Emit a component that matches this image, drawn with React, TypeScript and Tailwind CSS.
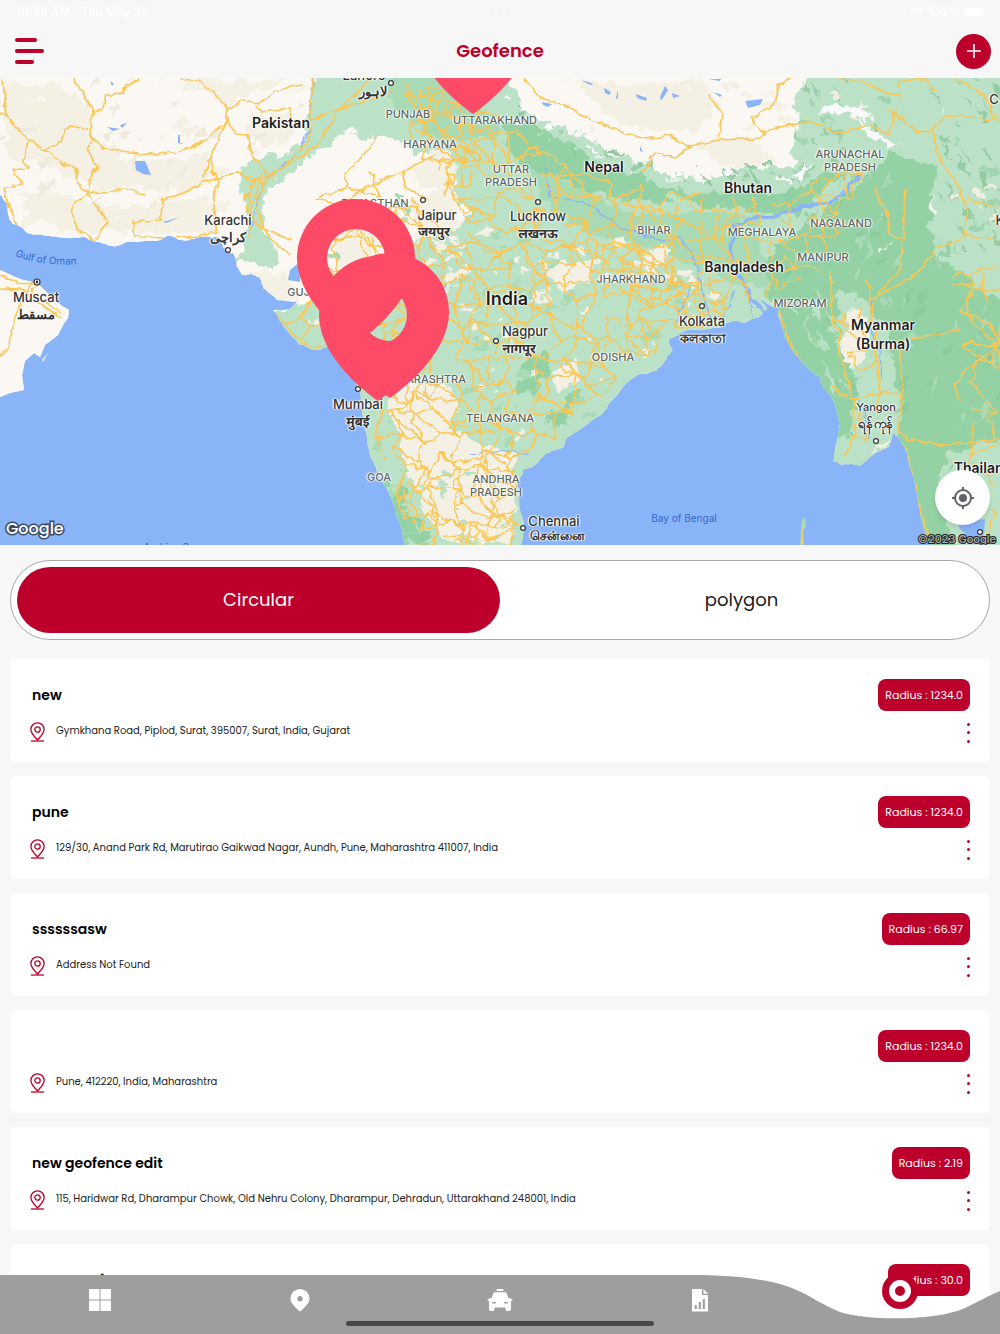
import React from "react";

type Pt = [number, number];

/* ---------- map data ---------- */

const ASIA: Pt[] = [
  [0, 70], [0, 194], [7, 203], [12, 223], [25, 231], [43, 235], [67, 238], [83, 237], [97, 242], [112, 246],
  [130, 242], [160, 240], [167, 236], [180, 240], [200, 237], [217, 237], [223, 248], [233, 253], [237, 267],
  [243, 275], [252, 274], [260, 278], [263, 288], [277, 300], [290, 301], [302, 299], [290, 309], [273, 310],
  [283, 325], [300, 345], [313, 350], [325, 348], [334, 335], [342, 345], [350, 365], [360, 393], [362, 410],
  [367, 437], [372, 460], [383, 483], [392, 500], [400, 523], [407, 550], [520, 550], [525, 527], [520, 510],
  [518, 483], [523, 470], [535, 465], [547, 453], [563, 448], [568, 437], [590, 422], [607, 408], [623, 387],
  [637, 375], [657, 370], [667, 358], [672, 351], [669, 339], [687, 330], [713, 328], [730, 322], [743, 323],
  [756, 318], [767, 310], [762, 300], [770, 306], [778, 308], [782, 327], [790, 347], [807, 367], [820, 377],
  [823, 387], [833, 400], [840, 423], [835, 450], [833, 462], [845, 464], [860, 466], [873, 455], [888, 448],
  [893, 431], [905, 447], [912, 473], [920, 510], [932, 550], [1010, 550], [1010, 70],
];

const OMAN: Pt[] = [
  [0, 270], [20, 279], [37, 283], [55, 300], [62, 306], [69, 310], [68, 318], [63, 325], [58, 335], [45, 345],
  [40, 357], [34, 353], [25, 361], [22, 375], [24, 390], [10, 393], [0, 397],
];

const GREEN: Pt[] = [
  [316, 70], [312, 100], [303, 130], [300, 145], [285, 158], [255, 157], [241, 168], [243, 190], [250, 225],
  [238, 262], [262, 268], [280, 262], [264, 235], [262, 205], [275, 180], [310, 157], [335, 137], [355, 133],
  [368, 140], [385, 138], [405, 145], [425, 152], [445, 155], [455, 190], [470, 215], [440, 228], [418, 240],
  [400, 255], [345, 280], [310, 300], [275, 312], [270, 325], [290, 355], [330, 360], [345, 393], [350, 430],
  [390, 560], [540, 560], [550, 480], [760, 345], [770, 350], [800, 400], [810, 480], [890, 480], [910, 560], [1010, 560], [1010, 70], [806, 70], [792, 105],
  [800, 125], [790, 150], [796, 166], [750, 168], [715, 178], [680, 176], [640, 165], [605, 148], [560, 128],
  [520, 108], [498, 70],
];

const DEEP: Pt[][] = [
  [[390, 70], [445, 70], [470, 105], [500, 125], [460, 140], [420, 132], [392, 110]],
  [[500, 140], [560, 180], [640, 215], [760, 215], [770, 290], [700, 270], [620, 240], [540, 200]],
  [[505, 118], [545, 130], [600, 165], [650, 182], [700, 192], [770, 192], [820, 175], [850, 165], [800, 215], [720, 206], [640, 200], [560, 178], [510, 150]],
  [[820, 215], [860, 185], [890, 150], [935, 165], [935, 240], [950, 265], [1010, 310], [1010, 440], [950, 450], [915, 475], [900, 430], [890, 330], [865, 300], [835, 290], [840, 330], [852, 370], [850, 440], [832, 440], [820, 392], [790, 350], [770, 300], [775, 245]],
  [[895, 435], [950, 445], [940, 490], [958, 550], [920, 550]],
  [[385, 475], [400, 485], [405, 510], [430, 530], [430, 550], [400, 550], [380, 500]],
  [[520, 365], [545, 350], [550, 375], [535, 398], [518, 390]],
  [[545, 425], [580, 390], [572, 410], [550, 430]],
];

const PALE: Pt[][] = [
  [[400, 372], [440, 382], [462, 405], [450, 430], [480, 445], [505, 450], [515, 480], [508, 545], [455, 545], [430, 520], [415, 480], [400, 440], [388, 400]],
  [[410, 195], [440, 185], [460, 200], [455, 230], [420, 242]],
  [[435, 150], [460, 165], [450, 195], [420, 190], [405, 165]],
  [[330, 230], [365, 222], [385, 240], [370, 275], [340, 265]],
  [[847, 310], [862, 308], [868, 345], [855, 368], [843, 350]],
  [[640, 262], [665, 245], [670, 262], [650, 275]],
  [[545, 270], [590, 262], [600, 285], [570, 292]],
  [[240, 272], [262, 268], [290, 280], [300, 300], [265, 300]],
  [[555, 370], [575, 358], [578, 385], [560, 392]],
  [[875, 450], [888, 440], [890, 448], [876, 456]],
];

const BEIGE: Pt[][] = [
  [[0, 78], [60, 84], [95, 110], [92, 140], [118, 155], [175, 162], [210, 150], [205, 185], [160, 192], [100, 190], [60, 170], [10, 160]],
  [[10, 190], [70, 195], [150, 205], [205, 195], [222, 225], [160, 234], [90, 232], [30, 222]],
  [[180, 78], [290, 78], [250, 92], [228, 110], [205, 92]],
  [[250, 110], [290, 112], [290, 140], [262, 148], [247, 130]],
  [[560, 78], [700, 78], [720, 100], [700, 135], [650, 130], [600, 105]],
  [[700, 145], [760, 145], [790, 160], [720, 165]],
];

const LAKES: Pt[][] = [
  [[135, 161], [145, 161], [151, 175], [143, 174], [136, 170]],
  [[178, 135], [180, 135], [180, 143], [183, 143], [182, 144], [178, 143]],
  [[107, 127], [120, 129], [113, 131]], [[120, 125], [127, 123], [122, 128]],
  [[110, 81], [114, 84], [112, 86]],
  [[745, 101], [763, 99], [760, 105], [748, 108]], [[636, 94], [647, 98], [646, 101], [637, 98]],
  [[665, 86], [668, 90], [661, 101], [660, 97]], [[672, 93], [680, 96], [673, 98]],
  [[604, 88], [611, 92], [609, 95], [605, 93]], [[581, 80], [594, 84], [590, 85]],
  [[542, 102], [552, 104], [548, 107], [543, 105]], [[618, 90], [618, 99], [616, 98]],
  [[713, 92], [722, 95], [720, 97]], [[709, 79], [721, 79], [720, 81]],
  [[640, 146], [643, 152], [640, 151]], [[163, 222], [180, 217], [166, 223]],
  [[290, 270], [300, 262], [300, 282], [288, 280]],
  [[957, 523], [985, 519], [984, 533], [978, 545], [961, 530]],
];

const MAIN_ROADS = [
  "M0 115 7 116 16 127 28 140 45 149 57 145 70 126 91 130 90 136 105 148 120 152 150 155 180 151 205 142 218 128 228 122 236 134 247 135 252 155 265 173",
  "M2 80 5 100 7 115M28 140 24 160 27 168 13 170 22 184 4 188 8 205 18 226",
  "M74 80 85 95 92 108 91 135 88 150 98 168 91 174 88 192 72 208 78 230 95 240",
  "M45 149 60 163 76 167 80 188 88 192 107 193 125 188 146 195M88 192 107 222 97 238",
  "M91 115 102 108 107 97 122 92 138 79M181 79 202 81 219 99 227 108 227 122 213 151 211 171 219 178",
  "M227 110 243 101 258 104 275 92 300 85M256 106 262 112 290 108 292 122M219 178 204 182 190 190 162 200 161 220 134 222 134 236 160 239 200 236 218 232",
  "M203 179 213 152M219 178 213 206 217 233M220 178 238 172 250 182 270 174 295 160 318 145 335 115 370 80",
  "M313 78 309 140 280 170 260 185 249 210 250 235",
  "M262 174 250 186 247 210 257 225 290 240M270 174 257 200 262 225 272 240 290 255M242 176 262 180M244 200 256 182",
  "M375 140 360 158 345 174 347 188 316 199 340 204 370 186 404 171 435 155M370 172 380 197 346 188M404 171 405 187 430 200M310 120 345 108 395 90",
  "M523 78 540 98 565 104 590 120 620 131 645 139 670 135 690 146 720 140 758 138 780 127 810 122 840 133 870 125 889 135 895 110",
  "M710 97 723 115 719 138M765 135 751 118 774 105 778 86 792 78M690 146 676 158 655 153 642 172",
  "M840 78 865 82 880 90 900 95 898 82 925 78 935 90M889 110 900 118 920 133 932 130 940 160 955 180 968 210 965 235 995 240",
  "M932 130 945 115 970 117 1000 121M954 78 985 95 995 120M1000 208 968 200M968 235 935 250 915 275 870 300",
  "M875 190 888 215 890 235 903 240 905 190M903 240 900 270 880 290 872 310 868 335",
  "M779 310 788 340 800 360 812 380M832 386 850 400 880 392 902 395M831 320 840 335 840 355 853 400 855 435 845 455",
  "M867 280 872 315 880 385 878 410M899 340 903 390 898 430 910 440 940 445 1000 440M868 345 900 342 930 335 960 330M1000 345 965 370 955 385 960 400",
  "M905 445 912 475 918 500 928 540M831 270 832 320 850 325M1000 290 975 290 960 310 990 325 1000 345",
  "M0 289 20 290 40 298 60 312M32 282 20 305 14 320 10 345 0 357M36 284 30 297 60 318M0 275 20 284 36 283",
  "M273 311 300 342 313 348 326 345M283 325 300 318 310 327 300 342M300 318 312 300",
];

function makeRandom(seed: number) {
  let s = seed;
  return () => {
    s = (s * 1664525 + 1013904223) % 4294967296;
    return s / 4294967296;
  };
}

function inside([x, y]: Pt, poly: Pt[]) {
  let hit = false;
  for (let i = 0, j = poly.length - 1; i < poly.length; j = i++) {
    const [xi, yi] = poly[i];
    const [xj, yj] = poly[j];
    if (yi > y !== yj > y && x < ((xj - xi) * (y - yi)) / (yj - yi) + xi) hit = !hit;
  }
  return hit;
}

const toPath = (p: Pt[]) => "M" + p.map(([x, y]) => `${x.toFixed(1)} ${y.toFixed(1)}`).join("L") + "Z";

/* Splits every edge and pushes the new points sideways, so that areas get a natural outline. */
function rough(poly: Pt[], seed: number, amount: number): Pt[] {
  const rnd = makeRandom(seed);
  let out = poly;
  let amp = amount;
  for (let pass = 0; pass < 3; pass++) {
    const next: Pt[] = [];
    out.forEach((a, i) => {
      const b = out[(i + 1) % out.length];
      next.push(a);
      next.push([(a[0] + b[0]) / 2 + (rnd() - 0.5) * amp, (a[1] + b[1]) / 2 + (rnd() - 0.5) * amp]);
    });
    out = next;
    amp *= 0.6;
  }
  return out;
}

function roadNet(region: Pt[], cell: number, seed: number, keep: number) {
  const rnd = makeRandom(seed);
  const cols = Math.ceil(1020 / cell);
  const rows = Math.ceil(480 / cell);
  const nodes: Pt[][] = [];
  for (let r = 0; r <= rows; r++) {
    nodes.push([]);
    for (let c = 0; c <= cols; c++) nodes[r].push([(c + (rnd() - 0.5) * 0.95) * cell, 74 + (r + (rnd() - 0.5) * 0.95) * cell]);
  }
  let d = "";
  const link = (a: Pt, b: Pt) => {
    const k1 = rnd();
    const k2 = rnd();
    if (rnd() > keep || !inside(a, region) || !inside(b, region)) return;
    const q: Pt = [a[0] + (b[0] - a[0]) / 3 + (k1 - 0.5) * cell * 0.3, a[1] + (b[1] - a[1]) / 3 + (k2 - 0.5) * cell * 0.3];
    const w: Pt = [a[0] + ((b[0] - a[0]) * 2) / 3 + (k2 - 0.5) * cell * 0.3, a[1] + ((b[1] - a[1]) * 2) / 3 + (k1 - 0.5) * cell * 0.3];
    d += "M" + [a, q, w, b].map(([x, y]) => `${x.toFixed(1)} ${y.toFixed(1)}`).join(" ");
  };
  for (let r = 0; r < rows; r++)
    for (let c = 0; c < cols; c++) {
      link(nodes[r][c], nodes[r][c + 1]);
      link(nodes[r][c], nodes[r + 1][c]);
      if (rnd() < 0.4) link(nodes[r][c], nodes[r + 1][c + 1]);
    }
  return d;
}

function patches(region: Pt[], count: number, size: number, seed: number, slant = 0) {
  const rnd = makeRandom(seed);
  let d = "";
  for (let i = 0; i < count; i++) {
    const cx = rnd() * 1000;
    const cy = 78 + rnd() * 467;
    const s = size * (0.35 + rnd());
    const pts: Pt[] = [];
    for (let k = 0; k < 9; k++) {
      const a = (k / 9) * Math.PI * 2;
      const r = s * (0.35 + rnd() * 0.9);
      const y = Math.sin(a) * r * 0.6;
      pts.push([cx + Math.cos(a) * r + y * slant, cy + y]);
    }
    if (inside([cx, cy], region)) d += toPath(pts);
  }
  return d;
}

/* Tall thin patches, for mountain ridges that run north to south. */
function ridges(region: Pt[], count: number, size: number, seed: number, lean: number) {
  const rnd = makeRandom(seed);
  let d = "";
  for (let i = 0; i < count; i++) {
    const x = rnd() * 1000;
    const y = 78 + rnd() * 467;
    const h = size * (0.5 + rnd());
    const w = 1 + rnd() * 3;
    const k = lean * h;
    if (inside([x, y], region))
      d += toPath([[x - k, y - h], [x + w - k / 2, y - h / 3], [x + w, y + h / 4], [x + k, y + h], [x - w / 2, y + h / 3], [x - w, y - h / 4]]);
  }
  return d;
}

const NORTH_INDIA: Pt[] = [[385, 78], [440, 80], [510, 120], [600, 180], [770, 200], [775, 300], [700, 325], [640, 300], [560, 240], [480, 245], [430, 190], [400, 120]];
const SOUTH_INDIA: Pt[] = [[410, 190], [470, 230], [640, 240], [740, 310], [668, 345], [655, 366], [635, 372], [600, 408], [565, 435], [520, 465], [517, 550], [408, 550], [385, 480], [368, 430], [364, 390], [330, 330], [300, 330], [330, 230]];
const DELHI: Pt[] = [[395, 78], [440, 78], [475, 135], [475, 190], [445, 190], [425, 150]];
const SOUTH_TIP: Pt[] = [[400, 480], [520, 465], [517, 550], [410, 550]];
const ASSAM: Pt[] = [[770, 185], [860, 165], [875, 180], [850, 215], [825, 270], [800, 290], [770, 290]];
const FAR_EAST: Pt[] = [[945, 250], [1010, 240], [1010, 550], [975, 550], [960, 440], [955, 330]];
const BURMA: Pt[] = [[835, 300], [872, 300], [885, 400], [870, 450], [840, 450], [850, 400]];
const HIMALAYA: Pt[] = [[490, 92], [530, 104], [570, 122], [610, 145], [650, 165], [700, 166], [780, 165], [810, 160], [800, 182], [740, 186], [670, 182], [610, 170], [560, 145], [510, 118]];
const HILLS: Pt[] = [[800, 78], [1000, 78], [1000, 250], [945, 260], [930, 150], [880, 150], [840, 165], [800, 180]];
const WEST: Pt[] = [[0, 78], [310, 78], [290, 150], [240, 160], [220, 230], [0, 225]];
const TIBET: Pt[] = [[520, 78], [800, 78], [790, 165], [700, 170], [600, 140]];
const NORTH_EAST: Pt[] = [[780, 190], [930, 160], [940, 240], [1010, 270], [1010, 470], [910, 470], [860, 420], [790, 330]];
const LOW_EAST: Pt[] = [[780, 290], [835, 290], [850, 400], [830, 390]];
const CENTRAL: Pt[] = [[410, 230], [470, 240], [620, 250], [660, 270], [640, 290], [560, 300], [480, 330], [420, 360], [400, 300]];

const PIN =
  "M0 0C-20 -14 -59 -48 -59 -86A59 59 0 0 1 59 -86C59 -48 20 -14 0 0ZM0 -57A29 29 0 0 0 0 -115A29 29 0 0 0 0 -57Z";
const PINS: Pt[] = [[356, 344], [378, 401], [390, 398], [473, 114]];

type Kind = "country" | "big" | "state" | "city" | "native" | "small" | "sea";
const KIND: Record<Kind, string> = {
  country: "text-sm font-semibold text-[#1c1c1c]",
  big: "text-lg font-semibold text-[#1c1c1c]",
  state: "text-[11px] font-medium text-[#5b6763]",
  city: "text-[13px] font-medium text-[#333]",
  native: "text-[13px] font-bold text-[#333]",
  small: "text-[11px] font-medium text-[#333]",
  sea: "text-[10px] text-[#3169c9]",
};

/* text, centre x, centre y, kind */
const LABELS: [string, number, number, Kind][] = [
  ["Pakistan", 281, 123, "country"], ["Nepal", 604, 167, "country"], ["Bhutan", 748, 188, "country"],
  ["Bangladesh", 744, 267, "country"], ["India", 507, 299, "big"], ["Myanmar", 883, 325, "country"],
  ["(Burma)", 883, 344, "country"], ["Thailand", 983, 468, "country"],
  ["PUNJAB", 408, 114, "state"], ["UTTARAKHAND", 495, 120, "state"], ["HARYANA", 430, 144, "state"],
  ["UTTAR", 511, 169, "state"], ["PRADESH", 511, 182, "state"], ["RAJASTHAN", 375, 203, "state"],
  ["BIHAR", 654, 230, "state"], ["MEGHALAYA", 762, 232, "state"], ["NAGALAND", 841, 223, "state"],
  ["ARUNACHAL", 850, 154, "state"], ["PRADESH", 850, 167, "state"], ["MANIPUR", 823, 257, "state"],
  ["JHARKHAND", 631, 279, "state"], ["MIZORAM", 800, 303, "state"], ["ODISHA", 613, 357, "state"],
  ["GUJARAT", 313, 292, "state"], ["MAHARASHTRA", 423, 379, "state"], ["TELANGANA", 500, 418, "state"],
  ["ANDHRA", 496, 479, "state"], ["PRADESH", 496, 492, "state"], ["GOA", 379, 477, "state"],
  ["Lahore", 364, 75, "city"], ["لاہور", 373, 91, "native"], ["Karachi", 228, 220, "city"], ["کراچی", 228, 237, "native"],
  ["Muscat", 36, 297, "city"], ["مسقط", 36, 314, "native"], ["Jaipur", 437, 215, "city"], ["जयपुर", 434, 231, "native"],
  ["Lucknow", 538, 216, "city"], ["लखनऊ", 538, 233, "native"], ["Nagpur", 525, 331, "city"], ["नागपूर", 519, 348, "native"],
  ["Mumbai", 358, 404, "city"], ["मुंबई", 358, 421, "native"], ["Kolkata", 702, 321, "city"], ["কলকাতা", 703, 338, "native"],
  ["Chennai", 554, 521, "city"], ["சென்னை", 557, 535, "native"], ["Yangon", 876, 407, "small"], ["ရန်ကုန်", 876, 423, "native"],
  ["Bay of Bengal", 684, 518, "sea"], ["Arabian Sea", 172, 547, "sea"], ["C", 994, 99, "city"], ["K", 1000, 220, "city"],
];

const TOWNS: Pt[] = [[391, 83], [228, 250], [423, 200], [538, 202], [496, 341], [358, 389], [702, 306], [523, 528], [876, 441], [980, 532]];

const HALO = "[text-shadow:0_0_2px_#fff,0_0_2px_#fff,1px_0_1px_#fff,-1px_0_1px_#fff]";

function MapDrawing() {
  return (
    <svg className="absolute inset-0 h-full w-full" viewBox="0 78 1000 467" preserveAspectRatio="none" aria-hidden="true">
      <defs>
        <clipPath id="land">
          <path d={toPath(rough(ASIA, 7, 3)) + toPath(OMAN)} />
        </clipPath>
        <filter id="wobble" x="0" y="0" width="100%" height="100%" colorInterpolationFilters="sRGB">
          <feTurbulence type="fractalNoise" baseFrequency="0.09" numOctaves="3" seed="4" />
          <feDisplacementMap in="SourceGraphic" scale="14" xChannelSelector="R" yChannelSelector="G" />
        </filter>
        <filter id="wander" x="0" y="0" width="100%" height="100%" colorInterpolationFilters="sRGB">
          <feTurbulence type="fractalNoise" baseFrequency="0.11" numOctaves="2" seed="9" />
          <feDisplacementMap in="SourceGraphic" scale="7" xChannelSelector="R" yChannelSelector="G" />
        </filter>
      </defs>
      <rect y="78" width="1000" height="467" fill="#8ab4f8" />
      <g clipPath="url(#land)">
        <rect y="70" width="1010" height="480" fill="#fbf8f3" />
        <g filter="url(#wobble)">
          <rect x="-20" y="60" width="1040" height="500" fill="#fbf8f3" />
          {BEIGE.map((p, i) => <path key={i} d={toPath(rough(p, i + 3, 14))} fill="#f5f0e4" />)}
          <path d={patches(WEST, 300, 10, 5, -0.6)} fill="#f5f0e4" />
          <path d={patches(WEST, 140, 7, 51, -0.6)} fill="#fbf8f3" />
          <path d={ridges(WEST, 260, 7, 52, -0.9)} fill="#efeadd" />
          <path d={patches(TIBET, 420, 8, 6)} fill="#f5f0e4" />
          <path d={patches(TIBET, 160, 6, 61)} fill="#fbf8f3" />
          <path d={toPath(rough(GREEN, 11, 9))} fill="#bbe2c6" />
          {DEEP.map((p, i) => <path key={i} d={toPath(rough(p, i + 20, 14))} fill={i < 2 ? "#a8dab5" : "#94d2a5"} />)}
          <path d={ridges(NORTH_EAST, 300, 9, 31, -0.4)} fill="#b1dec0" opacity="0.75" />
          <path d={ridges(NORTH_EAST, 260, 9, 32, -0.6)} fill="#88c79a" opacity="0.7" />
          <path d={ridges(LOW_EAST, 900, 12, 46, 0.5)} fill="#bbe2c6" />
          <path d={patches(FAR_EAST, 300, 6, 47, -0.6)} fill="#bbe2c6" />
          <path d={patches(SOUTH_INDIA, 420, 8, 33, -0.5)} fill="#a8dab5" />
          <path d={patches(NORTH_INDIA, 200, 8, 48)} fill="#bbe2c6" />
          {PALE.map((p, i) => <path key={i} d={toPath(rough(p, i + 40, 12))} fill="#f5f0e4" />)}
          <path d={patches(SOUTH_INDIA, 420, 7, 34)} fill="#f5f0e4" />
          <path d={patches(CENTRAL, 520, 8, 57, -0.8)} fill="#f5f0e4" />
          <path d={patches(SOUTH_INDIA, 300, 5, 49)} fill="#bbe2c6" />
          <path d={patches(SOUTH_TIP, 1400, 6, 39)} fill="#bbe2c6" />
          <path d={patches(HILLS, 420, 8, 35, 0.6)} fill="#a1d4b0" />
          <path d={ridges(HILLS, 900, 7, 53, 0.6)} fill="#8cc79c" opacity="0.8" />
          <path d={patches(HILLS, 260, 6, 36, 0.6)} fill="#f3eee1" />
          <path d={patches(HIMALAYA, 1500, 6, 37, 0.8)} fill="#93cba3" />
          <path d={ridges(HIMALAYA, 900, 5, 54, 0.8)} fill="#7fbb92" opacity="0.7" />
          <path d={patches(HIMALAYA, 1500, 5, 38, 0.8)} fill="#f8f9fa" />
          <path d={ridges(HIMALAYA, 300, 4, 55, 0.8)} fill="#dfe3e4" />
          <g fill="#f8f9fa">
            <path d={toPath(rough([[815, 112], [835, 104], [860, 106], [880, 118], [868, 121], [845, 113]], 4, 6))} />
            <path d={toPath(rough([[860, 120], [880, 133], [900, 144], [890, 147], [868, 135]], 5, 6))} />
            <path d={toPath(rough([[790, 178], [805, 165], [818, 163], [800, 178]], 6, 5))} />
            <path d="M739 121 760 106 757 112 742 124ZM942 105 945 113 943 118ZM933 195 935 212 932 212ZM893 240 880 251 882 252Z" />
          </g>
        </g>
        {LAKES.map((p, i) => <path key={i} d={toPath(p)} fill="#8ab4f8" />)}
        <g fill="none" stroke="#8ab4f8" filter="url(#wander)">
          <path d="M314 78 311 100 309 130 300 150 280 168 268 176 258 200 250 230" strokeWidth="1.4" />
          <path d="M860 175 845 192 830 202 800 208 775 217 750 218 735 226 731 250 733 270 745 285 752 300 766 314" strokeWidth="3" />
          <path d="M545 165 550 195 590 205 620 228 660 240 680 238 693 255 700 280 712 325" strokeWidth="1.5" />
          <path d="M675 325 690 285M720 325 735 290M752 318 750 290M855 395 865 415 870 440M470 455 500 450 530 455M440 295 450 280M872 300 870 330 880 350 882 380" strokeWidth="1.2" />
        </g>
        <g fill="none" stroke="#fac655" strokeLinejoin="round" strokeLinecap="round" filter="url(#wander)">
          <path d={roadNet(NORTH_INDIA, 17, 71, 0.78)} strokeWidth="1.5" />
          <path d={roadNet(SOUTH_INDIA, 19, 72, 0.8)} strokeWidth="1.5" />
          <path d={roadNet(DELHI, 11, 73, 0.65)} strokeWidth="1.5" />
          <path d={roadNet(SOUTH_TIP, 15, 74, 0.65)} strokeWidth="1.4" />
          <path d={roadNet(ASSAM, 15, 75, 0.65)} strokeWidth="1.4" />
          <path d={roadNet(FAR_EAST, 22, 76, 0.65)} strokeWidth="1.5" />
          <path d={roadNet(BURMA, 18, 77, 0.65)} strokeWidth="1.4" />
          {MAIN_ROADS.map((d) => <path key={d} d={d} strokeWidth="1.7" />)}
        </g>
      </g>
      <path d="M802 520 805 517 806 525 803 532 804 545H800L801 530Z" fill="#a8dab5" />
      <path d="M804 524 802 532 803 545" stroke="#f9cc60" fill="none" />
      <path d="M42 360 48 353 46 357 43 362Z" fill="#f5f0e4" />
      {TOWNS.map(([x, y]) => <circle key={x} cx={x} cy={y} r="2.4" fill="#fff" stroke="#333" strokeWidth="1.2" />)}
      <circle cx="37" cy="282" r="3" fill="#fff" stroke="#333" strokeWidth="1.2" />
      <circle cx="37" cy="282" r="1.4" fill="#333" />
    </svg>
  );
}

function GeofenceMap() {
  return (
    <section aria-label="Map" className="relative h-[467px] shrink-0 overflow-hidden font-['Inter','Noto_Sans',sans-serif]">
      <MapDrawing />
      {LABELS.map(([text, x, y, kind], i) => (
        <span
          key={i}
          className={`absolute -translate-x-1/2 -translate-y-1/2 leading-none whitespace-nowrap ${KIND[kind]} ${kind === "sea" ? "" : HALO}`}
          style={{ left: `${x / 10}%`, top: `${((y - 78) / 467) * 100}%` }}
        >
          {text}
        </span>
      ))}
      <svg className="absolute inset-0 h-full w-full" viewBox="0 78 1000 467" preserveAspectRatio="none">
        <path id="oman" d="M15 256Q45 268 90 263" fill="none" />
        <text fontSize="10" fill="#3169c9"><textPath href="#oman">Gulf of Oman</textPath></text>
        {PINS.map(([x, y]) => <path key={x} d={PIN} transform={`translate(${x} ${y})`} fill="#fc4a67" fillRule="evenodd" />)}
      </svg>
      <span className="absolute bottom-2 left-1.5 font-['Poppins',sans-serif] text-base leading-none font-medium text-white [paint-order:stroke_fill] [-webkit-text-stroke:3px_#3c4a66]">
        Google
      </span>
      <span className="absolute right-1 bottom-0 text-[11px] leading-none font-medium text-[#a9b2b8] [paint-order:stroke_fill] [-webkit-text-stroke:2px_#222]">
        ©2023 Google
      </span>
      <button
        type="button"
        aria-label="My location"
        className="absolute right-2.5 bottom-5 flex size-[55px] items-center justify-center rounded-full bg-white shadow-md"
      >
        <svg viewBox="0 0 24 24" className="size-6" fill="none" stroke="#5f6368" strokeWidth="2">
          <circle cx="12" cy="12" r="8" />
          <circle cx="12" cy="12" r="4" fill="#5f6368" stroke="none" />
          <path d="M12 1v3M12 20v3M1 12h3M20 12h3" />
        </svg>
      </button>
    </section>
  );
}

/* ---------- list ---------- */

const FENCES = [
  { name: "new", address: "Gymkhana Road, Piplod, Surat, 395007, Surat, India, Gujarat", radius: "1234.0" },
  { name: "pune", address: "129/30, Anand Park Rd, Marutirao Gaikwad Nagar, Aundh, Pune, Maharashtra 411007, India", radius: "1234.0" },
  { name: "ssssssasw", address: "Address Not Found", radius: "66.97" },
  { name: "", address: "Pune, 412220, India, Maharashtra", radius: "1234.0" },
  { name: "new geofence edit", address: "115, Haridwar Rd, Dharampur Chowk, Old Nehru Colony, Dharampur, Dehradun, Uttarakhand 248001, India", radius: "2.19" },
  { name: "pune geofence", address: "", radius: "30.0" },
];

function FenceCard({ name, address, radius }: (typeof FENCES)[number]) {
  return (
    <li className="rounded-md bg-white px-5 pt-5 pb-[18px]">
      <div className="flex h-8 items-center justify-between">
        <h2 className="pl-0.5 text-sm font-semibold text-black">{name}</h2>
        <span className="flex h-8 items-center rounded-lg bg-[#bc002b] px-[7px] text-[11px] text-white">Radius : {radius}</span>
      </div>
      <div className="mt-1.5 flex h-[27px] items-center">
        <svg viewBox="0 0 16 20" className="mt-0.5 h-5 w-4 shrink-0" fill="none" stroke="#bc002b" strokeWidth="1.3">
          <path d="M7.5 18C5.500 15.500 .9 11.500 .9 7.400a6.600 6.600 0 0 1 13.200 0C14.100 11.500 9.500 15.500 7.500 18Z" />
          <circle cx="7.500" cy="7.500" r="2.700" />
          <path d="M1 19h13" />
        </svg>
        <p className="flex-1 pl-2.5 text-[10px] text-[#222]">{address}</p>
        <button type="button" aria-label={`Options for ${name || "geofence"}`} className="mt-1 flex h-5 flex-col items-center justify-between">
          <i className="size-[3px] rounded-full bg-[#bc002b]" />
          <i className="size-[3px] rounded-full bg-[#bc002b]" />
          <i className="size-[3px] rounded-full bg-[#bc002b]" />
        </button>
      </div>
    </li>
  );
}

/* ---------- bottom bar ---------- */

const TABS = [
  {
    label: "Dashboard",
    icon: <path d="M1 1h10.500v10.500H1zM12.500 1H23v10.500H12.500zM1 12.500h10.500V23H1zM12.500 12.500H23V23H12.500z" />,
  },
  {
    label: "Live location",
    icon: <path fillRule="evenodd" d="M12 1a9.500 9.500 0 0 1 9.500 9.500c0 4-2.500 6.500-8 12a2.100 2.100 0 0 1-3 0c-5.500-5.500-8-8-8-12A9.500 9.500 0 0 1 12 1Zm0 7a2.700 2.700 0 1 0 0 5.400A2.700 2.700 0 0 0 12 8Z" />,
  },
  {
    label: "Vehicles",
    icon: (
      <>
        <rect x="8.500" y="1" width="7" height="2" rx="0.800" />
        <path
          fillRule="evenodd"
          d="M5.300 5.400q.5-1.200 1.700-1.200h10q1.200 0 1.700 1.200L20.300 9.800 24.300 11.300v1.400H23V21.300q0 1.700-1.500 1.700h-2.500q-1.500 0-1.500-1.700V19.500h-11v1.800Q6.500 23 5 23H2.500Q1 23 1 21.300V12.700H-.3v-1.400L3.700 9.800ZM4.300 14v1.500h3.500V14ZM16.200 14v1.500h3.500V14Z"
        />
      </>
    ),
  },
  {
    label: "Reports",
    icon: <path fillRule="evenodd" d="M4 1h10v6h6v16.500H4ZM15.500 1 20 5.700h-4.500ZM6.700 17v4h2.200v-4Zm4-3v7h2.200v-7Zm4-3v10h2.200V11Z" />,
  },
];

function BottomBar() {
  return (
    <nav aria-label="Main" className="absolute inset-x-0 bottom-0 h-[59px]">
      <svg className="absolute inset-0 h-full w-full" viewBox="0 0 1000 59" preserveAspectRatio="none" aria-hidden="true">
        <path d="M0 0H700C800 2 802 22 840 37C868 46 937 46 965 33C978 27 984 23 1000 16V59H0Z" fill="#9e9e9e" />
      </svg>
      <ul className="relative grid grid-cols-5">
        {TABS.map((t) => (
          <li key={t.label} className="flex justify-center pt-[13px]">
            <button type="button" aria-label={t.label}>
              <svg viewBox="0 0 24 24" className="size-6 overflow-visible" fill="#fff">{t.icon}</svg>
            </button>
          </li>
        ))}
        <li className="flex justify-center">
          <button type="button" aria-label="Geofence" aria-current="page" className="-mt-0.5 flex size-9 items-center justify-center rounded-full bg-[#bc002b]">
            <span className="size-[22px] rounded-full border-[6px] border-white" />
          </button>
        </li>
      </ul>
      <div className="absolute bottom-2 left-1/2 h-[5px] w-[308px] -translate-x-1/2 rounded-full bg-[#484848]" />
    </nav>
  );
}

export default function App() {
  return (
    <div className="relative flex h-screen flex-col overflow-hidden bg-[#f7f7f7] font-['Poppins','Inter',sans-serif]">
      <div className="flex h-6 shrink-0 items-center justify-between px-4 font-['Inter',sans-serif] text-xs font-medium whitespace-nowrap text-white">
        <div className="flex flex-1 gap-2.5"><span>10:48 AM</span><span>Thu May 25</span></div>
        <div className="flex gap-1">
          <i className="size-1 rounded-full bg-[#f1f1f1]" />
          <i className="size-1 rounded-full bg-[#f1f1f1]" />
          <i className="size-1 rounded-full bg-[#f1f1f1]" />
        </div>
        <div className="flex flex-1 items-center justify-end gap-1">
          <svg viewBox="0 0 14 10" className="h-2.5 w-3.5" fill="none" stroke="#fff" strokeWidth="1.700">
            <path d="M1 4a8.500 8.500 0 0 1 12 0M3.200 6.300a5.500 5.500 0 0 1 7.600 0M5.500 8.500a2 2 0 0 1 3 0" />
          </svg>
          <span>100%</span>
          <i className="h-2 w-5 rounded-sm bg-white" />
        </div>
      </div>
      <header className="grid h-[54px] shrink-0 grid-cols-[1fr_auto_1fr] items-center px-[9px]">
        <button type="button" aria-label="Menu" className="ml-1.5 flex w-9 flex-col gap-[7px]">
          <i className="h-1 w-[22px] rounded-full bg-[#bc002b]" />
          <i className="h-1 w-[29px] rounded-full bg-[#bc002b]" />
          <i className="h-1 w-[19px] rounded-full bg-[#bc002b]" />
        </button>
        <h1 className="text-lg font-semibold text-[#bc002b]">Geofence</h1>
        <button type="button" aria-label="Add geofence" className="flex size-[35px] items-center justify-center justify-self-end rounded-full bg-[#bc002b]">
          <svg viewBox="0 0 14 14" className="size-3.5" stroke="#fff" strokeWidth="1.600"><path d="M7 0v14M0 7h14" /></svg>
        </button>
      </header>
      <GeofenceMap />
      <main className="px-2.5 pt-[15px]">
        <div role="tablist" aria-label="Geofence type" className="grid h-20 grid-cols-2 rounded-[40px] border border-[#a9a9a9] bg-white p-1.5 text-lg">
          <button type="button" role="tab" aria-selected="true" className="rounded-[33px] bg-[#bc002b] text-white">Circular</button>
          <button type="button" role="tab" aria-selected="false" className="rounded-[33px] text-[#1a1a1a]">polygon</button>
        </div>
        <ul className="mt-[19px] flex flex-col gap-3.5">
          {FENCES.map((f, i) => <FenceCard key={i} {...f} />)}
        </ul>
      </main>
      <BottomBar />
    </div>
  );
}
